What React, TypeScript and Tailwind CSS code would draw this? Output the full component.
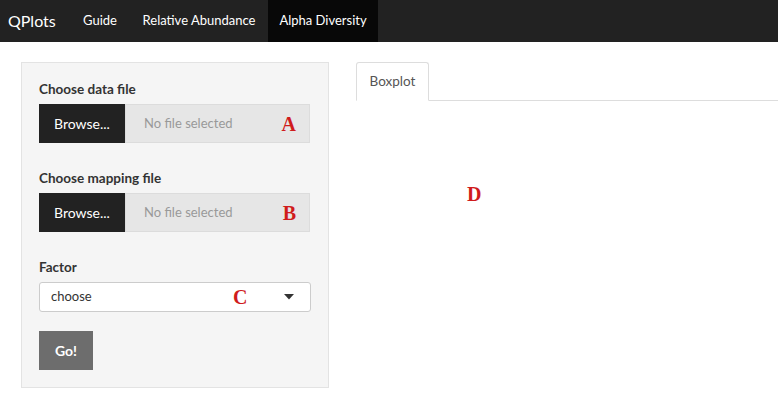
import React from "react";

const font = { fontFamily: "Lato, 'Open Sans', sans-serif" };

function FileInput({ letter }: { letter: string }) {
  return (
    <div className="flex h-[39px] w-[271px]">
      <div className="flex w-[86px] items-center justify-center bg-[#222222] text-[14px] text-white">
        Browse...
      </div>
      <div className="flex flex-1 items-center justify-between border border-[#dcdcdc] bg-[#e6e6e6] pl-[18px] pr-[13px] text-[13px] text-[#999999]">
        <span>No file selected</span>
        <span className="font-['Liberation_Serif',serif] text-[20px] font-bold text-[#d01c1c]">{letter}</span>
      </div>
    </div>
  );
}

export default function App() {
  return (
    <div className="min-h-[405px] bg-white text-[#333333]" style={font}>
      {/* Navbar */}
      <nav className="flex h-[42px] items-stretch bg-[#222222] text-[13px] text-white">
        <div className="flex w-[70px] items-center pl-[8px] text-[16px]">QPlots</div>
        <div className="flex w-[60px] items-center justify-center">Guide</div>
        <div className="flex w-[138px] items-center justify-center">Relative Abundance</div>
        <div className="flex w-[110px] items-center justify-center bg-[#080808]">Alpha Diversity</div>
      </nav>

      <div className="flex gap-[27px] pl-[21px] pt-[20px]">
        {/* Sidebar */}
        <div className="w-[308px] border border-[#e3e3e3] bg-[#f5f5f5] px-[17px] pb-[17px] pt-[16px]">
          <div className="text-[13.5px] font-bold leading-[20px]">Choose data file</div>
          <div className="mt-[5px]">
            <FileInput letter="A" />
          </div>
          <div className="mt-[25px] text-[13.5px] font-bold leading-[20px]">Choose mapping file</div>
          <div className="mt-[5px]">
            <FileInput letter="B" />
          </div>
          <div className="mt-[25px] text-[13.5px] font-bold leading-[20px]">Factor</div>
          <div className="relative mt-[5px] flex h-[30px] w-[272px] items-center rounded-[3px] border border-[#cccccc] bg-white pl-[11px] text-[13px]">
            <span>choose</span>
            <span className="absolute left-[193px] font-['Liberation_Serif',serif] text-[20px] font-bold text-[#d01c1c]">C</span>
            <svg className="absolute right-[16px]" width="10" height="6" viewBox="0 0 10 6">
              <path d="M0 0h10L5 5.5z" fill="#333" />
            </svg>
          </div>
          <div className="mt-[19px] flex h-[39px] w-[54px] items-center justify-center bg-[#6d6d6d] text-[14px] font-bold text-white">
            Go!
          </div>
        </div>

        {/* Main */}
        <div className="flex-1">
          <div className="flex border-b border-[#dddddd]">
            <div className="-mb-px flex h-[39px] w-[73px] items-center justify-center rounded-t-[3px] border border-b-white border-[#dddddd] bg-white text-[13.5px] text-[#555]">
              Boxplot
            </div>
          </div>
          <div className="pl-[111px] pt-[83px] font-['Liberation_Serif',serif] text-[20px] font-bold leading-none text-[#d01c1c]">
            D
          </div>
        </div>
      </div>
    </div>
  );
}
